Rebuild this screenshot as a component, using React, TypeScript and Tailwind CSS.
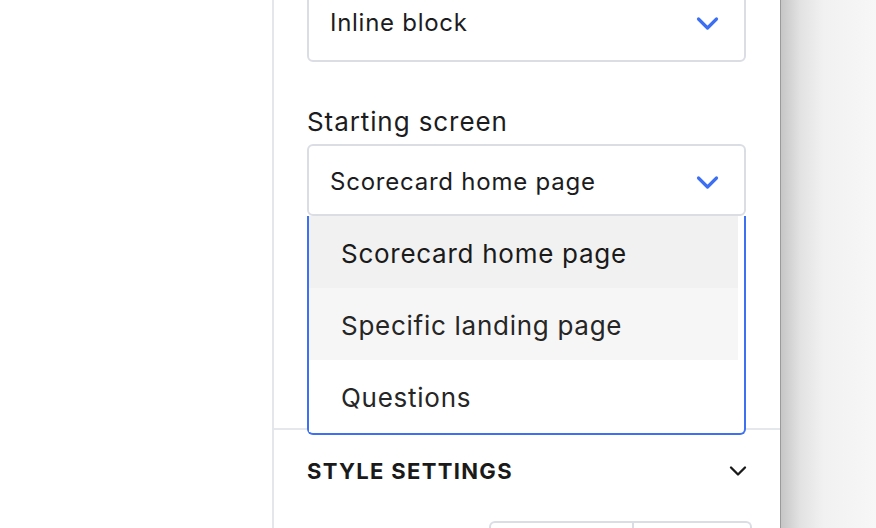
import { ChevronDown } from 'lucide-react'

const font = { fontFamily: 'Inter, "Noto Sans", sans-serif' }

function BlueChevron() {
  return (
    <svg width="23" height="15" viewBox="0 0 23 15" fill="none" className="shrink-0">
      <polyline
        points="2.5,3 11.5,12 20.5,3"
        stroke="#3c6ff2"
        strokeWidth="3.2"
        strokeLinecap="round"
        strokeLinejoin="round"
      />
    </svg>
  )
}

const options = ['Scorecard home page', 'Specific landing page', 'Questions']

export default function App() {
  return (
    <div className="flex h-[528px] w-[876px] overflow-hidden bg-white text-[#1c1c1e]" style={font}>
      <div className="w-[272px] shrink-0 bg-white" />

      <div className="flex w-[508px] shrink-0 flex-col border-l-2 border-[#e3e6eb] bg-white">
        <div className="pl-[33px] pr-[34px]">
          <div className="-mt-[19px] flex h-[81px] items-center justify-between rounded-md border-2 border-[#dadde3] pl-[21px] pr-[25px] pt-[3px]">
            <span className="text-[24px] leading-none tracking-[0.03em]">Inline block</span>
            <BlueChevron />
          </div>

          <div className="mt-[45px] text-[26px] leading-[30px] tracking-[0.035em]">Starting screen</div>

          <div className="relative mt-[7px]">
            <div className="flex h-[72px] items-center justify-between rounded-md border-2 border-[#dadde3] bg-white pl-[21px] pr-[25px] pt-[4px]">
              <span className="text-[24px] leading-none tracking-[0.032em]">Scorecard home page</span>
              <BlueChevron />
            </div>
            <div className="absolute left-0 right-0 top-full z-10 rounded-b-md border-2 border-t-0 border-[#3d71f1] bg-white pb-[1px] pr-[6px]">
              {options.map((option, i) => (
                <div
                  key={option}
                  className={`flex h-[72px] items-center pl-[32px] pt-[4px] text-[26px] leading-none tracking-[0.028em] ${
                    i === 0 ? 'bg-[#f1f1f1] text-[#1a1a1a]' : i === 1 ? 'bg-[#f6f6f6] text-[#262626]' : 'bg-white text-[#262626]'
                  }`}
                >
                  {option}
                </div>
              ))}
            </div>
          </div>

          <div className="h-[212px]" />
        </div>

        <div className="border-t-2 border-[#e4e7ec]">
          <div className="flex h-[82px] items-center justify-between pl-[33px] pr-[34px]">
            <span className="text-[22px] font-bold uppercase leading-none tracking-[0.06em] text-[#1a1a1a]">
              Style settings
            </span>
            <ChevronDown size={28} strokeWidth={2} className="mr-[-6px] text-[#1a1a1a]" />
          </div>
          <div className="mt-[9px] flex pl-[215px]">
            <div className="h-[20px] w-[145px] rounded-tl-md border-2 border-b-0 border-[#dadde3]" />
            <div className="h-[20px] w-[118px] rounded-tr-md border-2 border-b-0 border-l-0 border-[#dadde3]" />
          </div>
        </div>
      </div>

      <div className="flex-1 border-l border-[#9a9a9a] bg-[linear-gradient(to_right,#c6c6c6,#e2e2e2_20%,#f1f1f1_45%,#f7f7f7)]" />
    </div>
  )
}
